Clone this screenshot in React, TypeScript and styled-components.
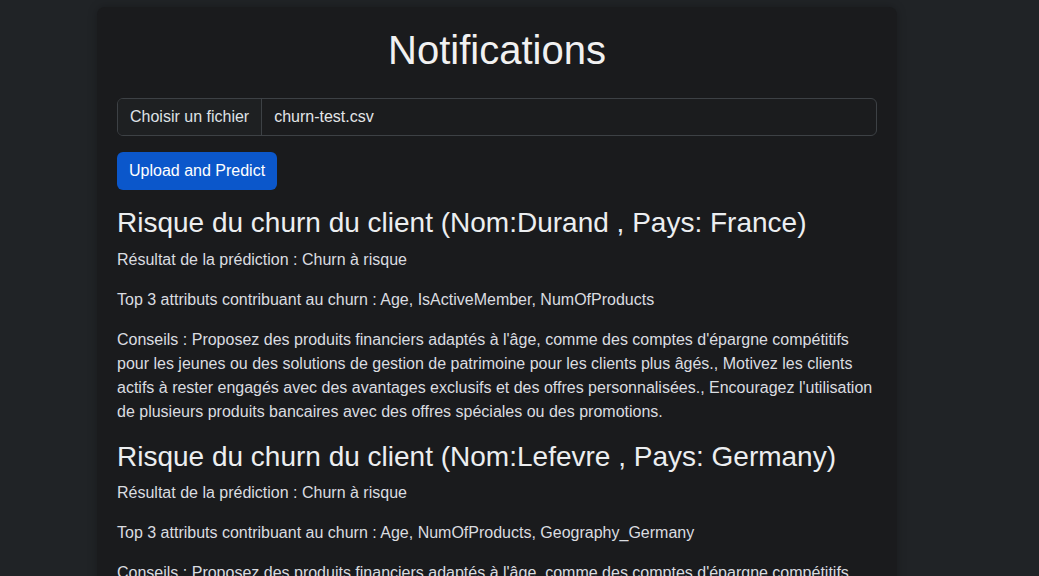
import React from "react";
import styled, { createGlobalStyle } from "styled-components";

const Global = createGlobalStyle`
  html, body { margin: 0; padding: 0; }
  body {
    background: #202326;
    color: #dee2e6;
    font-family: "Liberation Sans", Arial, sans-serif;
    font-size: 16px;
    line-height: 1.5;
  }
  * { box-sizing: border-box; }
`;

const Page = styled.div`
  display: flex;
  justify-content: center;
  padding: 7px 45px 0 0;
  min-height: 576px;
`;

const Card = styled.main`
  width: 800px;
  background: #1a1b1d;
  border-radius: 8px;
  box-shadow: 0 0 10px rgba(0, 0, 0, 0.25);
  padding: 19px 20px 40px;
`;

const Title = styled.h1`
  margin: 0 0 24px;
  text-align: center;
  font-size: 40px;
  font-weight: 500;
  line-height: 1.2;
  color: #f1f1f1;
`;

const FileGroup = styled.label`
  display: flex;
  height: 38px;
  border: 1px solid #3d4145;
  border-radius: 6px;
  overflow: hidden;
  background: #1b1c1e;
  margin-bottom: 16px;
`;

const FileButton = styled.span`
  display: flex;
  align-items: center;
  padding: 0 12px;
  border-right: 1px solid #3d4145;
  background: #1e2022;
  color: #dee2e6;
`;

const FileName = styled.span`
  display: flex;
  align-items: center;
  padding: 0 12px;
  color: #e3e5e8;
`;

const PrimaryButton = styled.button`
  display: block;
  height: 38px;
  padding: 0 12px;
  border: none;
  border-radius: 6px;
  background: #0b57cb;
  color: #ffffff;
  font-family: inherit;
  font-size: 16px;
  margin-bottom: 16px;
`;

const ClientTitle = styled.h3`
  margin: 0 0 8px;
  font-size: 28px;
  font-weight: 500;
  line-height: 1.2;
  color: #eceef0;
`;

const Para = styled.p`
  margin: 0 0 16px;
  color: #dadde0;
`;

const clients = [
  {
    name: "Durand",
    country: "France",
    attrs: "Age, IsActiveMember, NumOfProducts",
    advice:
      "Proposez des produits financiers adaptés à l'âge, comme des comptes d'épargne compétitifs pour les jeunes ou des solutions de gestion de patrimoine pour les clients plus âgés., Motivez les clients actifs à rester engagés avec des avantages exclusifs et des offres personnalisées., Encouragez l'utilisation de plusieurs produits bancaires avec des offres spéciales ou des promotions.",
  },
  {
    name: "Lefevre",
    country: "Germany",
    attrs: "Age, NumOfProducts, Geography_Germany",
    advice:
      "Proposez des produits financiers adaptés à l'âge, comme des comptes d'épargne compétitifs pour les jeunes ou des solutions de gestion de patrimoine pour les clients plus âgés., Encouragez l'utilisation de plusieurs produits bancaires avec des offres spéciales ou des promotions.",
  },
];

export default function App() {
  return (
    <>
      <Global />
      <Page>
        <Card>
          <Title>Notifications</Title>
          <FileGroup>
            <FileButton>Choisir un fichier</FileButton>
            <FileName>churn-test.csv</FileName>
          </FileGroup>
          <PrimaryButton>Upload and Predict</PrimaryButton>
          {clients.map((c) => (
            <section key={c.name}>
              <ClientTitle>
                Risque du churn du client (Nom:{c.name} , Pays: {c.country})
              </ClientTitle>
              <Para>Résultat de la prédiction : Churn à risque</Para>
              <Para>Top 3 attributs contribuant au churn : {c.attrs}</Para>
              <Para>Conseils : {c.advice}</Para>
            </section>
          ))}
        </Card>
      </Page>
    </>
  );
}
